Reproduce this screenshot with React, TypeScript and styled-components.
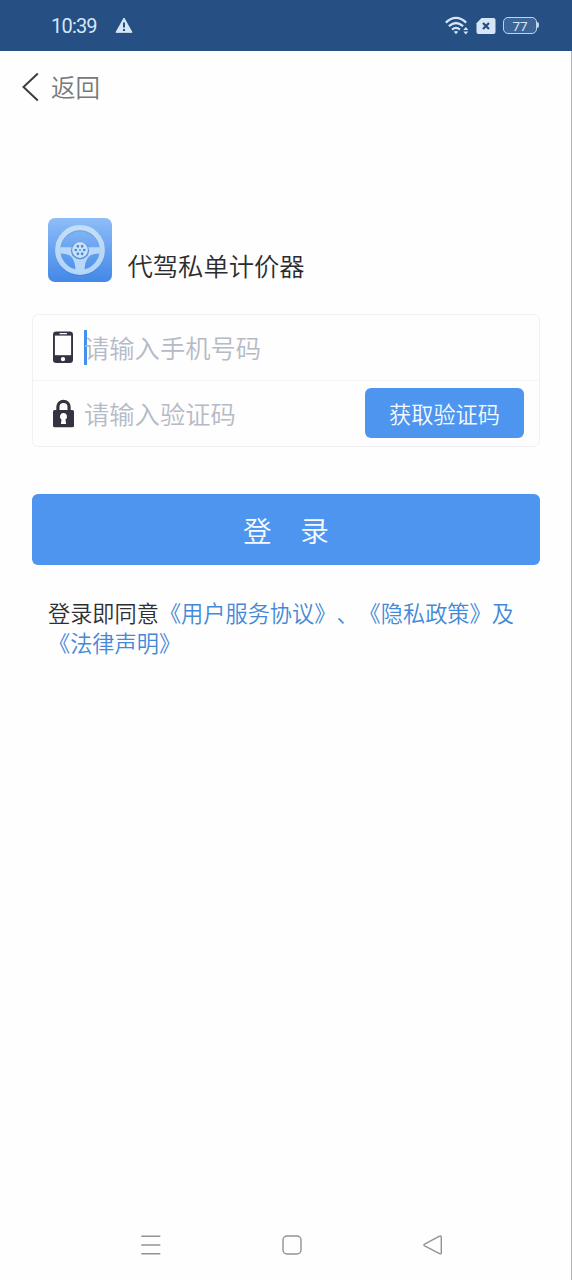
import React from 'react';
import styled, { createGlobalStyle } from 'styled-components';

const GlobalStyle = createGlobalStyle`
  * { box-sizing: border-box; }
  body {
    margin: 0;
    background: #fefefe;
    font-family: "Noto Sans CJK SC", sans-serif;
    font-weight: 350;
    text-spacing-trim: space-all;
  }
  button, input { font-family: inherit; font-weight: inherit; border: 0; }
`;

const Screen = styled.div`
  width: 572px;
  height: 1280px;
  display: flex;
  flex-direction: column;
  overflow: hidden;
`;

const StatusBar = styled.header`
  flex: none;
  height: 51px;
  padding: 0 33px 0 51px;
  display: flex;
  align-items: center;
  background: #264f84;
  color: #d6e6f7;
`;

const Clock = styled.span`
  width: 64px;
  font: 400 20px/24px Roboto, sans-serif;
  letter-spacing: -0.8px;
`;

const StatusIcons = styled.div`
  margin-left: auto;
  display: flex;
  align-items: center;
  gap: 7px;
`;

const Page = styled.main`
  flex: 1;
  display: flex;
  flex-direction: column;
  border-right: 1px solid #b4b5b7;
`;

const BackBar = styled.nav`
  height: 74px;
  padding: 0 0 2px 21px;
  display: flex;
  align-items: center;
  gap: 12px;
  color: #77787a;
  font-size: 24.5px;
  line-height: 36px;
`;

const Content = styled.div`
  flex: 1;
  padding: 93px 31px 0 32px;
`;

const Brand = styled.div`
  display: flex;
  align-items: flex-end;
  gap: 16px;
  padding-left: 15.5px;
`;

const AppName = styled.h1`
  margin: 0 0 -1px;
  font-size: 25.3px;
  font-weight: inherit;
  line-height: 36px;
  color: #2b2c30;
`;

const Fields = styled.form`
  width: 508px;
  margin-top: 31.5px;
  border: 1px solid #f1f1f2;
  border-radius: 6px;
`;

const Field = styled.div<{ $divided?: boolean }>`
  height: ${p => (p.$divided ? 66 : 65)}px;
  padding: 0 15px 0 19px;
  display: flex;
  align-items: center;
  border-bottom: ${p => (p.$divided ? '1px solid #f4f4f5' : '0')};
`;

const Placeholder = styled.span`
  flex: 1;
  margin-left: 9px;
  font-size: 25.3px;
  line-height: 36px;
  color: #b5bac6;
`;

const Caret = styled.span`
  width: 3px;
  height: 35px;
  margin: 0 -12px 0 9px;
  background: #4290f0;
`;

const CodeButton = styled.button`
  width: 159px;
  height: 50px;
  padding: 0 0 1px;
  border-radius: 6px;
  background: #4e95ef;
  color: #f7fbff;
  font-size: 22.2px;
`;

const LoginButton = styled.button`
  display: block;
  width: 508px;
  height: 71px;
  margin-top: 47.5px;
  padding: 0 0 1px;
  border-radius: 6px;
  background: #4e95ef;
  color: #f7fbff;
  font-size: 28.6px;
`;

const Agreement = styled.p`
  margin: 32px 0 0 16px;
  width: 476px;
  font-size: 22.2px;
  line-height: 30px;
  color: #2e2f33;
`;

const Policy = styled.span`
  color: #4489d8;
`;

const NavBar = styled.footer`
  height: 70px;
  padding: 0 127px 0 139px;
  display: flex;
  align-items: center;
  justify-content: space-between;
`;

const Warning = () => (
  <svg width="18" height="17" viewBox="0 0 18 17">
    <path d="M9 1 17 15.3H1Z" fill="#d6e6f7" stroke="#d6e6f7" strokeWidth="1" strokeLinejoin="round" />
    <path d="M9 5.5v5M9 12v2" stroke="#264f84" strokeWidth="2" />
  </svg>
);

const Wifi = () => (
  <svg width="24" height="20" viewBox="0 0 24 20">
    <g fill="none" stroke="#d6e6f7" strokeWidth="2.3">
      <path d="M.8 6.6Q11 -2.8 21.2 6.6" />
      <path d="M3.9 10.2Q11 3.8 18.1 10.2" />
      <path d="M7.1 13.6Q11 10.2 14.9 13.6" />
    </g>
    <path d="M8.9 15.8Q11 14.2 13.1 15.8L11 18.2Z" fill="#d6e6f7" />
    <path d="m20.8 11 2.5 3h-5zM20.8 18.6l2.5-3h-5z" fill="#d6e6f7" />
  </svg>
);

const Sim = () => (
  <svg width="20" height="16" viewBox="0 0 20 16">
    <path d="M5.5 0H17.5Q19.5 0 19.5 2V14Q19.5 16 17.5 16H2.5Q.5 16 .5 14V5.2Z" fill="#d6e6f7" />
    <path d="m7 5 6 6m0-6-6 6" stroke="#264f84" strokeWidth="2.3" />
  </svg>
);

const Battery = styled.span`
  position: relative;
  width: 34px;
  height: 17px;
  margin-right: 2px;
  border: 1.5px solid #bdd3ec;
  border-radius: 5px;
  background: #3e6597;
  color: #d6e6f7;
  font: 400 13.5px/16px Roboto, sans-serif;
  text-align: center;

  &::after {
    content: '';
    position: absolute;
    right: -3px;
    top: 4px;
    width: 2px;
    height: 6px;
    border-radius: 0 2px 2px 0;
    background: #bdd3ec;
  }
`;

const BackArrow = () => (
  <svg width="18" height="30" viewBox="0 0 18 30" fill="none" stroke="#3d3e44" strokeWidth="2">
    <path d="M16.8 1.5 2.5 15l14.3 13.5" />
  </svg>
);

const boltAngles = [0, 60, 120, 180, 240, 300];

const SteeringLogo = () => (
  <svg width="64" height="64" viewBox="0 0 64 64">
    <defs>
      <linearGradient id="tile" x2="0" y2="1">
        <stop stopColor="#8ebdf8" />
        <stop offset="1" stopColor="#4288e7" />
      </linearGradient>
      <linearGradient id="wheel" x2="0" y2="1">
        <stop stopColor="#c5def6" />
        <stop offset="1" stopColor="#b3d5f7" />
      </linearGradient>
    </defs>
    <rect width="64" height="64" rx="7" fill="url(#tile)" />
    <circle cx="32" cy="32.8" r="22.3" fill="none" stroke="#2766b8" strokeWidth="5.6" opacity=".22" />
    <circle cx="32" cy="32" r="22.3" fill="none" stroke="url(#wheel)" strokeWidth="5.2" />
    <path d="M10.5 29.3h43v6.2q-9-.6-12.500 3Q36.500 42.500 36.500 54.500h-9Q27.500 42.500 23 38.500q-3.500-3.600-12.500-3z" fill="#b9d8f7" />
    <circle cx="32" cy="32.5" r="9" fill="#5591dc" />
    <circle cx="32" cy="32" r="7.900" fill="#cbe2f8" />
    {boltAngles.map(a => (
      <circle key={a} cx="36.300" cy="32" r="1.350" fill="#4c88d4" transform={`rotate(${a} 32 32)`} />
    ))}
    <circle cx="32" cy="32" r="1.100" fill="#5e9be4" />
  </svg>
);

const Phone = () => (
  <svg width="23" height="33" viewBox="0 0 23 33">
    <rect x="1" y="0.5" width="20" height="31.500" rx="3.200" fill="#33343f" />
    <path d="M2.900 4.600h16.200v19.600H2.900z" fill="#fefefe" />
    <path d="M8 2.600h6.500" stroke="#fefefe" strokeWidth="1.100" strokeLinecap="round" />
    <circle cx="11" cy="28.100" r="2.200" fill="#fefefe" />
  </svg>
);

const Lock = () => (
  <svg width="23" height="29" viewBox="0 0 23 29">
    <path d="M5.900 12V7.900a5.600 5.600 0 0 1 11.200 0V12" fill="none" stroke="#33343f" strokeWidth="3.200" />
    <rect x="1" y="11" width="21" height="17.300" rx="1.600" fill="#33343f" />
    <path d="M11.500 14a3.500 3.500 0 0 1 2 6.400l.6 4.600H8.900l.6-4.600a3.500 3.500 0 0 1 2-6.400Z" fill="#fefefe" />
  </svg>
);

const navLine = { fill: 'none', stroke: '#929292', strokeWidth: 1.4 };

export default function App() {
  return (
    <Screen>
      <GlobalStyle />
      <StatusBar>
        <Clock>10:39</Clock>
        <Warning />
        <StatusIcons>
          <Wifi />
          <Sim />
          <Battery>77</Battery>
        </StatusIcons>
      </StatusBar>
      <Page>
        <BackBar>
          <BackArrow />
          <span>返回</span>
        </BackBar>
        <Content>
          <Brand>
            <SteeringLogo />
            <AppName>代驾私单计价器</AppName>
          </Brand>
          <Fields>
            <Field $divided>
              <Phone />
              <Caret />
              <Placeholder>请输入手机号码</Placeholder>
            </Field>
            <Field>
              <Lock />
              <Placeholder>请输入验证码</Placeholder>
              <CodeButton type="button">获取验证码</CodeButton>
            </Field>
          </Fields>
          <LoginButton type="button">登　录</LoginButton>
          <Agreement>
            登录即同意<Policy>《用户服务协议》、《隐私政策》及<br />《法律声明》</Policy>
          </Agreement>
        </Content>
        <NavBar>
          <svg width="24" height="24" viewBox="0 0 24 24" {...navLine}>
            <path d="M2.3 3.3h19M2.3 12h19M2.3 20.7h19" />
          </svg>
          <svg width="24" height="24" viewBox="0 0 24 24" {...navLine}>
            <rect x="3" y="3" width="18" height="18" rx="4" />
          </svg>
          <svg width="24" height="24" viewBox="0 0 24 24" {...navLine} strokeLinejoin="round">
            <path d="M4.6 11.2 19.6 3.2Q21.3 2.6 21.3 4.3V19.7Q21.3 21.4 19.6 20.6L4.6 12.8Q3.2 12 4.6 11.2Z" />
          </svg>
        </NavBar>
      </Page>
    </Screen>
  );
}
